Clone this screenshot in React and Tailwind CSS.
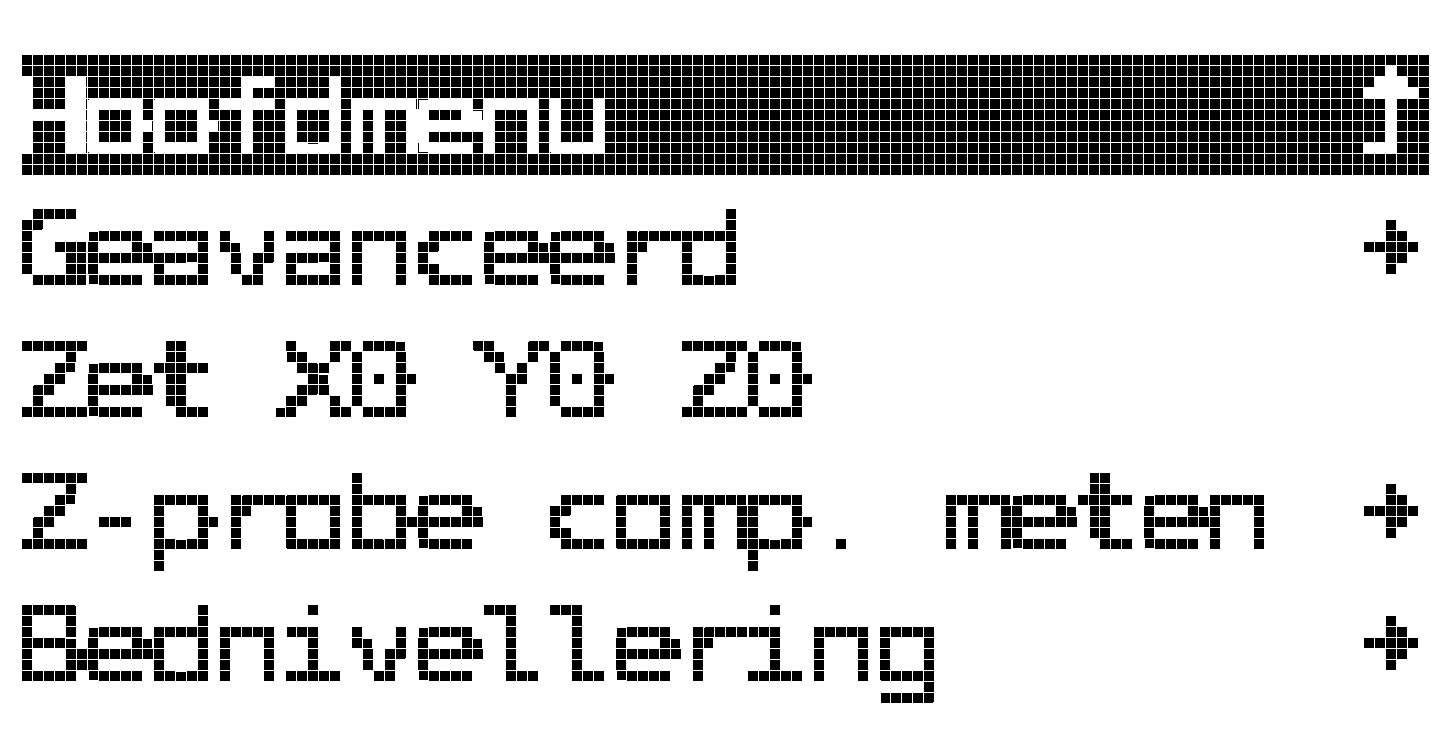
import React from "react";

// 5-column pixel maps for the little LCD icons ("#" = lit pixel)
const BACK_ARROW = ["..#..", ".###.", "#####", "..#..", "..#..", "..#..", "..#..", "###.."];
const SUBMENU = ["..#..", "..##.", "#####", "..##.", "..#.."];

const items = [
  { label: "Geavanceerd", sub: true },
  { label: "Zet X0 Y0 Z0", sub: false },
  { label: "Z-probe comp. meten", sub: true },
  { label: "Bednivellering", sub: true },
];

const PixelIcon = ({ rows, color, className }) => (
  <svg
    width={rows[0].length * 11}
    height={rows.length * 11}
    viewBox={`0 0 ${rows[0].length} ${rows.length}`}
    shapeRendering="crispEdges"
    className={className}
  >
    {rows.flatMap((row, y) =>
      [...row].map((ch, x) =>
        ch === "#" ? (
          <rect key={`${x}-${y}`} x={x} y={y} width="1" height="1" fill={color} />
        ) : null
      )
    )}
  </svg>
);

// thin horizontal bars get a small shadow so the 11px sampling catches them
const LcdText = ({ children, className = "" }) => (
  <span
    className={`block ml-[-11px] origin-left scale-x-125 font-['DejaVu_Sans_Mono',monospace] text-[105px] leading-[127px] tracking-[-10.42px] whitespace-pre [text-shadow:0_1px_0_currentColor,0_2px_0_currentColor] ${className}`}
  >
    {children}
  </span>
);

const App = () => {
  return (
    <div className="relative w-[1452px] h-[748px] bg-white overflow-hidden">
      {/* samples the page on an 11px grid -> 128x64 dot matrix look */}
      <svg width="0" height="0" className="absolute">
        <defs>
          <filter
            id="lcd"
            x="0"
            y="0"
            width="100%"
            height="100%"
            colorInterpolationFilters="sRGB"
          >
            <feFlood x="4" y="4" width="2" height="2" floodColor="#000" result="dot" />
            <feComposite in="dot" in2="dot" operator="over" x="0" y="0" width="11" height="11" result="cell" />
            <feTile in="cell" result="grid" />
            <feComposite in="SourceGraphic" in2="grid" operator="in" result="sampled" />
            <feComponentTransfer in="sampled" result="crisp">
              <feFuncR type="discrete" tableValues="0 1" />
              <feFuncG type="discrete" tableValues="0 1" />
              <feFuncB type="discrete" tableValues="0 1" />
              <feFuncA type="discrete" tableValues="0 1" />
            </feComponentTransfer>
            <feMorphology in="crisp" operator="dilate" radius="4" />
          </filter>
        </defs>
      </svg>

      <div className="w-[1452px] h-[748px] p-[22px] [filter:url(#lcd)]">
        <div className="h-[33px]" />

        <div className="h-[121px] bg-black flex items-start justify-between text-white">
          <LcdText>Hoofdmenu</LcdText>
          <PixelIcon rows={BACK_ARROW} color="#fff" className="shrink-0 mt-[11px] mr-[11px]" />
        </div>

        <div className="h-[11px]" />

        {items.map((item) => (
          <div key={item.label} className="h-[132px] flex items-start justify-between text-black">
            <LcdText>{item.label}</LcdText>
            {item.sub && (
              <PixelIcon rows={SUBMENU} color="#000" className="shrink-0 mt-[33px] mr-[11px]" />
            )}
          </div>
        ))}
      </div>
    </div>
  );
};

export default App;
